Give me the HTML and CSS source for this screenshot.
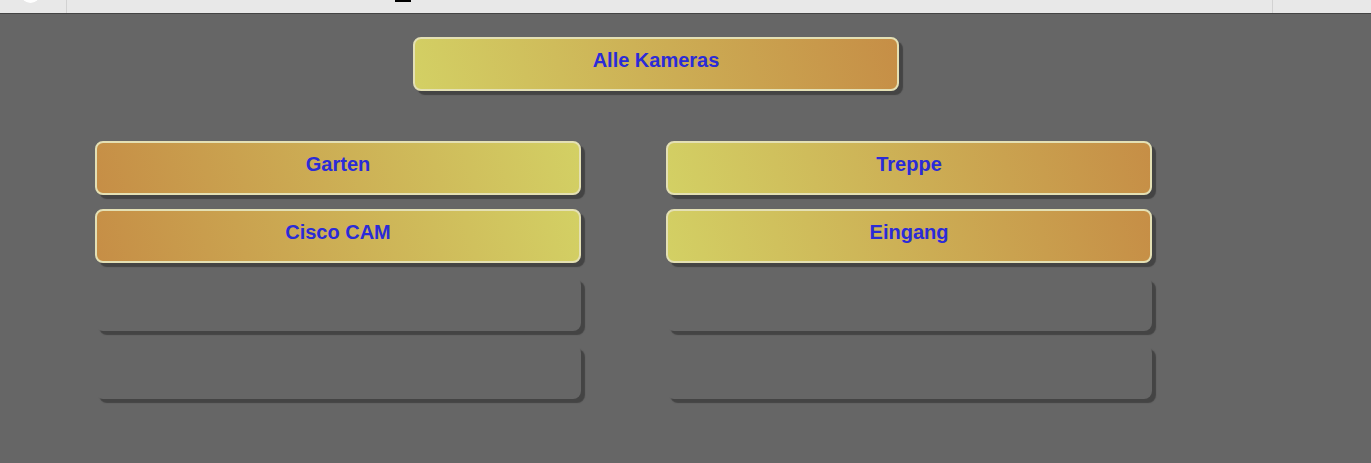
FILE: index.html
```html
<!DOCTYPE html>
<html lang="de">
<head>
    <meta charset="UTF-8">
    <meta name="viewport" content="width=device-width, initial-scale=1.0">
    <title>Kameras</title>
    <link rel="stylesheet" href="styles.css">
</head>
<body>
    <div class="topbar">
        <div class="tb-left"><span class="tb-dot"></span></div>
        <div class="tb-mid"><span class="tb-caret"></span></div>
        <div class="tb-right"></div>
    </div>

    <div class="page">
        <div class="top-row">
            <a class="cam-btn warm-right" href="#">Alle Kameras</a>
        </div>

        <div class="cam-grid">
            <a class="cam-btn warm-left" href="#">Garten</a>
            <a class="cam-btn warm-right" href="#">Treppe</a>
            <a class="cam-btn warm-left" href="#">Cisco CAM</a>
            <a class="cam-btn warm-right" href="#">Eingang</a>
            <span class="cam-btn empty"></span>
            <span class="cam-btn empty"></span>
            <span class="cam-btn empty"></span>
            <span class="cam-btn empty"></span>
        </div>
    </div>
</body>
</html>
```

FILE: styles.css
```css
html {
    background-color: #666;
}

body {
    margin: 0;
    min-height: 463px;
    background-color: #666;
    font-family: "Liberation Sans", Arial, sans-serif;
}

.topbar {
    display: flex;
    height: 13px;
    background-color: #e8e8e8;
    border-bottom: 1px solid #444;
}

.tb-left {
    position: relative;
    width: 66px;
    border-right: 1px solid #d2d2d2;
}

.tb-dot {
    position: absolute;
    left: 21px;
    top: -16px;
    width: 19px;
    height: 19px;
    border-radius: 50%;
    background-color: #fff;
}

.tb-mid {
    flex: 1;
    position: relative;
}

.tb-caret {
    position: absolute;
    left: 328px;
    top: 0;
    width: 16px;
    height: 2px;
    background-color: #000;
}

.tb-right {
    width: 98px;
    border-left: 1px solid #d2d2d2;
}

.page {
    padding: 23px 0 40px 95px;
}

.top-row {
    padding-left: 318px;
    margin-bottom: 50px;
}

.cam-grid {
    display: grid;
    grid-template-columns: 486px 486px;
    column-gap: 85px;
    row-gap: 14px;
}

.cam-btn {
    display: block;
    box-sizing: border-box;
    width: 486px;
    height: 54px;
    padding-bottom: 8px;
    line-height: 42px;
    text-align: center;
    font-size: 20px;
    font-weight: bold;
    color: #2b2bd8;
    text-decoration: none;
    border: 2px solid #e4e0b4;
    border-radius: 8px;
    box-shadow: 4px 4px 1px #444;
}

.warm-right {
    background: linear-gradient(75deg, #d3d064 0%, #c68e46 100%);
}

.warm-left {
    background: linear-gradient(75deg, #c68e46 0%, #d3d064 100%);
}

.cam-btn.empty {
    background: none;
    border-color: transparent;
}
```
